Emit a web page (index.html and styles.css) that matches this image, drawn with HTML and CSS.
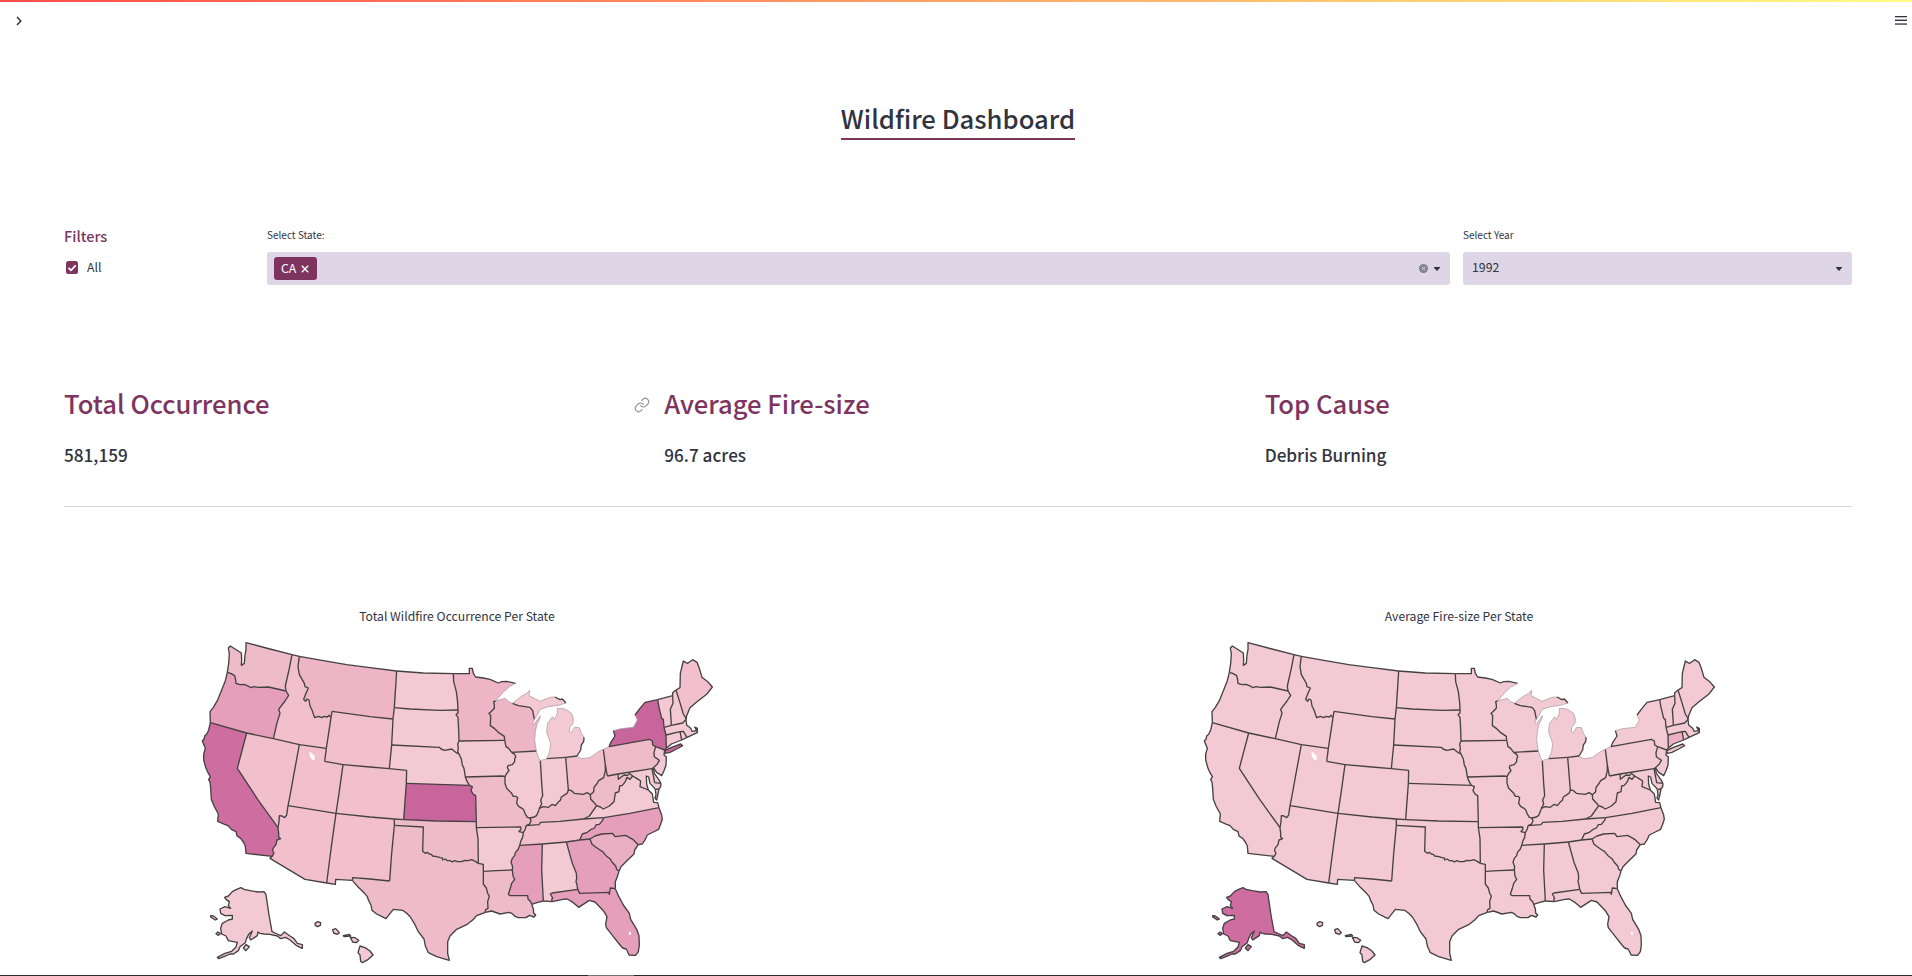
FILE: index.html
```html
<!DOCTYPE html>
<html lang="en">
<head>
<meta charset="utf-8">
<title>Wildfire Dashboard</title>
<link rel="stylesheet" href="styles.css">
</head>
<body>
<div class="app">
  <div class="decoration"></div>
  <header class="toolbar">
    <svg class="chevron" viewBox="0 0 6 10"><path d="M1 1l3.8 4L1 9"/></svg>
    <svg class="menu" viewBox="0 0 12 9"><rect width="12" height="1.3"/><rect y="3.6" width="12" height="1.4"/><rect y="7.4" width="12" height="1.3"/></svg>
  </header>

  <main class="content">
    <div class="title-row"><h1 class="title">Wildfire Dashboard</h1></div>

    <section class="filters">
      <div class="filter-all">
        <h3 class="filters-title">Filters</h3>
        <label class="check">
          <svg class="box" viewBox="0 0 12 13"><rect width="12" height="13" rx="2.5"/><path d="M2.5 6.8l2.5 2.5 4.7-5"/></svg>
          <span>All</span>
        </label>
      </div>
      <div class="field">
        <div class="label">Select State:</div>
        <div class="select multi">
          <span class="chip"><span>CA</span><svg class="chip-x" viewBox="0 0 8 8"><path d="M.8.8l6.4 6.4M7.2.8L.8 7.2"/></svg></span>
          <span class="controls">
            <svg class="clear" viewBox="0 0 9 9"><circle cx="4.5" cy="4.5" r="4.5"/><path d="M3 3l3 3M6 3L3 6"/></svg>
            <svg class="caret" viewBox="0 0 6 4"><path d="M0 0h6v.8L3 4 0 .8z"/></svg>
          </span>
        </div>
      </div>
      <div class="field">
        <div class="label">Select Year</div>
        <div class="select single">
          <span class="value">1992</span>
          <svg class="caret" viewBox="0 0 6 4"><path d="M0 0h6v.8L3 4 0 .8z"/></svg>
        </div>
      </div>
    </section>

    <section class="metrics">
      <div class="metric"><h2>Total Occurrence</h2><p>581,159</p></div>
      <div class="metric">
        <svg class="anchor" viewBox="0 0 24 24"><path d="M10 13a5 5 0 0 0 7.54.54l3-3a5 5 0 0 0-7.07-7.07l-1.72 1.71"/><path d="M14 11a5 5 0 0 0-7.54-.54l-3 3a5 5 0 0 0 7.07 7.07l1.71-1.71"/></svg>
        <h2>Average Fire-size</h2><p>96.7 acres</p>
      </div>
      <div class="metric"><h2>Top Cause</h2><p>Debris Burning</p></div>
    </section>

    <section class="charts">
      <figure class="chart"><figcaption>Total Wildfire Occurrence Per State</figcaption><svg class="map" id="occurrence" viewBox="0 0 1620 1038"></svg></figure>
      <figure class="chart"><figcaption>Average Fire-size Per State</figcaption><svg class="map" id="firesize" viewBox="0 0 1620 1038"></svg></figure>
    </section>
  </main>
  <footer class="edge"><span class="edge-light"></span></footer>
</div>
<script src="maps.js"></script>
</body>
</html>
```
FILE: styles.css
```css
* { box-sizing: border-box; }
body {
  margin: 0;
  background: #fff;
  color: #31333f;
  font-family: "Noto Sans CJK SC", "Noto Sans CJK JP", sans-serif;
}
h1, h2, h3, p, figure { margin: 0; }
svg { display: block; flex: none; }

.app { height: 976px; overflow: hidden; display: flex; flex-direction: column; }
.decoration { height: 2px; flex: none; background: linear-gradient(90deg, #ff4b4b, #fffd80); }
.toolbar { height: 38px; flex: none; padding: 14px 5px 0 16px; display: flex; justify-content: space-between; }
.chevron { width: 6px; height: 10px; fill: none; stroke: #31333f; stroke-width: 1.5; }
.menu { width: 12px; height: 9px; fill: #31333f; }
.content { flex: 1; min-height: 0; padding: 0 60px 0 64px; }

.title-row { display: flex; justify-content: center; padding-top: 56px; height: 186px; }
.title {
  height: 44px;
  border-bottom: 2px solid #7d3560;
  font-size: 25.65px;
  line-height: 43px;
  font-weight: 500;
  white-space: nowrap;
}

.filters { display: grid; grid-template-columns: 190px 1183px 389px; gap: 13px; height: 151px; }
.filters-title { color: #7d3560; font-size: 14.5px; line-height: 20px; font-weight: 500; }
.check { display: flex; align-items: center; gap: 9px; padding: 12px 0 0 2px; font-size: 12.3px; line-height: 20px; }
.check span { margin-top: -1px; }
.box { width: 12px; height: 13px; fill: #7d3560; }
.box path { fill: none; stroke: #fff; stroke-width: 1.8; }
.label { height: 26px; font-size: 10px; line-height: 18px; white-space: nowrap; }
.select {
  height: 33px;
  display: flex;
  align-items: center;
  justify-content: space-between;
  border-radius: 3px;
  background: #ded5e6;
  font-size: 12.3px;
  line-height: 20px;
}
.multi { padding: 0 10px 0 7px; }
.single { padding: 0 10px 0 9px; }
.value { margin-top: -3px; }
.chip {
  display: flex;
  align-items: center;
  gap: 5px;
  width: 43px;
  height: 23px;
  padding-left: 7px;
  border-radius: 3px;
  background: #7d3560;
  color: #fff;
}
.chip span { margin-top: -1px; }
.chip-x { width: 8px; height: 8px; stroke: #fff; stroke-width: 1.4; }
.controls { display: flex; align-items: center; gap: 6px; }
.clear { width: 9px; height: 9px; fill: #838495; }
.clear path { stroke: #ded5e6; stroke-width: 1; }
.caret { width: 6px; height: 4px; fill: #31333f; }

.metrics { display: grid; grid-template-columns: repeat(3, 1fr); gap: 13px; height: 130px; border-bottom: 1px solid #d5d6d9; }
.metric { position: relative; padding-top: 6px; }
.metric h2 { color: #7d3560; font-size: 25.6px; line-height: 40px; font-weight: 500; white-space: nowrap; }
.metric p { padding-top: 19px; font-size: 17.15px; line-height: 26px; font-weight: 500; white-space: nowrap; }
.anchor { position: absolute; left: -30px; top: 20px; width: 16px; height: 16px; fill: none; stroke: #8d8e96; stroke-width: 1.7; stroke-linecap: round; stroke-linejoin: round; }

.charts { display: grid; grid-template-columns: 1002px 1fr; padding-top: 99px; }
.chart { width: 786px; }
.chart figcaption { height: 24px; font-size: 12.2px; line-height: 20px; text-align: center; }
.map { width: 540px; height: 346px; margin-left: 126px; overflow: visible; }
.border { fill: none; stroke: #454044; stroke-width: 4; stroke-linejoin: round; }
.shore { fill: none; stroke: #a99aa0; stroke-width: 2.2; stroke-linejoin: round; }
.lake { fill: #fff; }

.edge { height: 1px; flex: none; background: #2b2b2e; padding-left: 588px; }
.edge-light { display: block; width: 46px; height: 1px; background: #737373; }
```
FILE: maps.js
```js
// Shared boundary lines; a state outline is a chain of these ("-" walks one backwards).
const arcs = {
  waCoast: "112,127 116,100 118,72 115,54 121,48 140,60 154,69 155,90 154,106 163,100 165,75 168,58 168,38 240,57 306,74",
  waOr: "112,127 122,130 134,137 137,150 138,160 150,164 163,163 178,170 182,173 192,170 205,172 235,171 262,177 288,183",
  waId: "306,74 298,115 286,168 288,183",
  orCoast: "112,127 106,152 95,180 82,212 70,232 60,245 61,278",
  orCa: "61,278 170,309", orNv: "170,309 250,326",
  orId: "288,183 296,196 285,213 266,238 270,250 262,275 250,326",
  nvId: "250,326 328,344", idUt: "328,344 409,355", idN: "306,74 328,79",
  idMt: "328,79 324,110 328,134 343,160 345,170 355,174 348,190 341,208 347,214 351,207 357,210 360,228 366,240 370,252 374,263 385,259 395,263 402,259 412,261 417,256 423,263",
  mtWyW: "423,263 426,244", idWy: "423,263 409,355",
  mtN: "328,79 400,92 470,104 540,113 620,123",
  mtNd: "620,123 613,233", mtSd: "613,233 609,267", mtWyS: "426,244 540,260 609,267",
  wySd: "609,267 605,345", wyNe: "605,345 598,416", wyCo: "598,416 540,411 459,404",
  wyUtS: "459,404 404,394", wyUtW: "404,394 409,355",
  nvCa: "170,309 142,415 203,508 264,593",
  nvAz: "264,593 267,575 268,557 276,558 284,563 290,555 294,527",
  nvUt: "328,344 311,436 298,508 294,527", utAz: "294,527 438,550", utCo: "459,404 447,490 438,550",
  coNeN: "598,416 650,421", coNeE: "650,421 649,460", coKs: "649,460 641,569",
  coNm: "438,550 540,561 613,567", coOk: "613,567 641,569",
  caCoast: "61,278 56,300 50,313 44,318 42,328 37,333 46,355 41,372 41,390 48,415 54,428 61,440 56,449 60,456 62,475 64,508 72,528 85,552 83,574 90,577 104,583 114,587 124,598 138,605 141,618 152,625 160,636 166,648 168,670 247,679",
  caAz: "264,593 266,610 266,621 272,626 261,630 258,644 249,655 248,663 252,669 247,679",
  azS: "247,679 240,685 345,748 410,759", azNm: "438,550 424,650 410,759",
  nmS: "410,759 436,763 437,748 487,751", nmTxS: "487,751 488,743 540,747 599,753",
  nmTxE: "599,753 605,670 613,586", nmOk: "613,586 613,567",
  txOk: "613,586 700,591 698,664 706,670 712,667 718,672 724,673 728,678 740,680 750,683 757,684 758,690 766,687 772,692 780,692 787,696 794,692 802,695 815,695 824,691 835,692 845,689 856,694 865,700",
  txAr: "865,700 880,703 880,724", txLa: "880,724 880,762 889,774 893,790 898,798 893,815 894,835 886,840 886,847",
  txCoast: "487,751 505,772 522,788 532,800 536,812 543,825 546,841 560,852 588,866 610,838 638,841 650,850 661,861 675,884 685,905 702,927 706,948 715,968 740,980 778,991 773,970 773,935 780,918 800,898 830,884 848,870 860,857 886,847",
  okKs: "641,569 740,573 859,575", okMo: "859,575 859,593", okAr: "859,593 864,625 865,700",
  ndN: "620,123 700,129 790,131", ndMn: "790,131 791,155 799,185 803,218 804,240",
  ndSd: "613,233 660,237 750,241 804,240", sdMn: "804,240 804,248 798,254 804,262 806,300 807,333",
  sdIa: "807,333 803,342 805,355 803,365 807,372",
  neSd: "605,345 748,352 753,357 764,361 785,357 797,367 807,372",
  neIa: "807,372 814,387 817,405 822,415 826,441", neMo: "826,441 830,452 838,466",
  neKs: "649,460 838,466", ksMo: "838,466 847,470 843,482 850,493 857,497 859,575",
  mnN: "790,131 838,131 838,115 847,115 850,130 857,141 880,144 900,148 925,159 935,155 950,154 977,160",
  mnLake: "977,160 958,170 938,188 917,213",
  mnWi: "917,213 911,215 913,225 913,235 902,246 897,250 902,257 901,287 914,296 925,307 943,319 944,331",
  mnIa: "807,333 944,331", iaWi: "944,331 948,350 956,355 965,367", wiIl: "965,367 1039,363",
  iaIl: "965,367 974,373 977,380 974,388 974,395 967,404 954,407 952,413 957,422 949,432 945,440",
  iaMo: "826,441 937,438 945,440",
  moIl: "945,440 945,460 950,475 965,490 970,499 978,499 983,503 980,520 986,529 996,535 1001,539 1005,550 1012,562 1020,564",
  moKy: "1020,564 1023,573 1018,583 1008,587", moTn: "1008,587 1006,597 1000,608",
  moAr: "859,593 992,591 993,597 987,605 1000,608",
  arTn: "1000,608 998,622 993,632 989,646",
  arMs: "989,646 985,657 976,668 974,677 967,685 963,697 968,710 967,720",
  arLa: "880,724 920,722 967,720",
  msLa: "967,720 969,738 974,748 965,760 961,775 955,793 960,797 1013,797 1014,807 1022,815 1025,823",
  laCoast: "886,847 905,843 930,852 958,847 965,850 975,859 985,863 1008,863 1018,856 1032,861 1037,855 1031,849 1030,836 1025,823",
  msCoast: "1025,823 1043,817 1060,813", msAl: "1057,642 1055,720 1060,813",
  msTn: "989,646 1057,642", alTn: "1057,642 1129,636", gaTn: "1129,636 1169,630",
  alGa: "1129,636 1147,700 1159,730 1160,745 1158,755 1161,765 1163,778",
  alFl: "1163,778 1086,789 1081,792 1088,804 1085,808 1087,815", alCoast: "1060,813 1087,815",
  gaFl: "1163,778 1169,790 1257,787 1258,793 1261,774 1276,776",
  flCoast: "1276,776 1285,797 1300,825 1318,850 1322,868 1340,898 1347,917 1348,945 1345,965 1337,976 1317,975 1312,963 1308,957 1298,954 1290,945 1270,920 1249,893 1247,883 1251,860 1240,842 1215,816 1198,811 1166,832 1150,818 1132,807 1118,808 1087,815",
  gaCoast: "1276,776 1276,755 1283,737 1287,724",
  gaSc: "1200,627 1206,643 1217,651 1230,660 1238,665 1248,677 1260,686 1266,696 1277,708 1280,718 1287,724",
  gaNc: "1169,630 1200,627", tnNc: "1169,630 1177,612 1192,607 1202,599 1213,594 1219,584 1228,583 1237,572 1241,563",
  scNc: "1200,627 1215,618 1235,612 1268,610 1275,620 1307,616 1328,628 1345,644",
  scCoast: "1287,724 1293,710 1313,690 1332,672 1334,660 1345,644",
  ncCoast: "1345,644 1357,642 1366,628 1372,615 1390,606 1406,598 1411,585 1417,568 1415,555 1407,533",
  vaNc: "1241,563 1320,550 1407,533", kyTn: "1008,587 1047,584 1052,577 1110,574 1180,567", tnVa: "1180,567 1241,563",
  kyVa: "1180,567 1198,558 1220,527",
  kyWv: "1201,494 1202,507 1213,519 1220,527",
  kyOh: "1135,480 1143,481 1153,490 1180,493 1191,488 1201,494",
  kyIn: "1048,535 1060,530 1075,532 1087,523 1096,527 1104,517 1111,511 1114,501 1125,494 1132,489 1135,480",
  kyIl: "1020,564 1033,561 1040,556 1046,542 1048,535",
  ilIn: "1051,392 1055,460 1058,497 1052,510 1055,522 1048,535",
  inMi: "1070,386 1127,382", inOh: "1127,382 1135,480", ohMi: "1127,382 1161,378",
  inLake: "1051,392 1070,386", ilLake: "1039,363 1045,382 1051,392",
  wiMi: "967,220 985,227 1020,232 1028,242 1032,262 1033,268",
  wiN: "917,213 945,205 956,215 967,220",
  wiE: "1033,268 1028,280 1033,283 1042,269 1051,257 1049,268 1041,282 1036,305 1034,330 1039,363",
  upN: "967,220 992,200 1010,190 1019,181 1017,197 1050,214 1080,202 1095,201",
  upE: "1095,201 1110,209 1117,207 1128,219",
  upS: "1128,219 1105,226 1075,230 1050,238 1042,255 1033,268",
  lpW: "1070,386 1079,365 1082,340 1071,310 1070,300 1073,280 1088,260 1093,269 1102,250 1102,235 1125,237 1145,250 1150,267 1149,280 1139,292 1138,304 1144,308 1154,292 1168,293 1174,310 1182,322",
  lpE: "1182,322 1181,335 1174,345 1172,360 1161,378",
  ohLake: "1161,378 1175,386 1200,383 1225,365 1240,358",
  ohPa: "1240,358 1246,405", paWvW: "1246,405 1252,438",
  ohWv: "1246,405 1246,422 1241,443 1226,452 1220,462 1212,472 1211,485 1201,494",
  paLake: "1240,358 1257,350", paNy: "1257,350 1378,328 1387,333 1388,345 1397,350",
  paNj: "1397,350 1392,368 1393,380 1408,391 1402,402 1390,413",
  paWvS: "1252,438 1284,432", paMd: "1284,432 1386,416", paDe: "1386,416 1390,413",
  mdWv: "1284,432 1285,448 1294,441 1302,435 1313,436 1318,430 1328,438",
  wvVa: "1328,438 1320,448 1311,442 1306,455 1297,466 1289,468 1287,485 1276,489 1272,515 1258,528 1240,537 1231,531 1220,527",
  mdVa: "1328,438 1340,445 1352,453 1350,470 1375,480",
  mdBay: "1375,480 1370,462 1369,438 1376,441 1380,460 1392,473 1396,478",
  mdS: "1396,478 1407,477", mdE: "1407,477 1412,470 1413,460", deMd: "1386,416 1394,458 1413,460",
  deCoast: "1390,413 1393,430 1406,448 1413,460",
  vaEast: "1396,478 1398,495 1395,504 1400,510 1404,492 1407,477",
  vaCoast: "1375,480 1387,492 1391,517 1403,518 1407,533",
  nyNj: "1397,350 1424,360",
  njCoast: "1424,360 1422,375 1429,381 1428,405 1422,422 1415,437 1400,427 1390,413",
  nyErie: "1257,350 1262,338 1275,318 1270,302",
  nyOntario: "1270,302 1292,296 1330,292 1342,270 1335,255",
  nyN: "1335,255 1350,235 1365,217 1403,209",
  nyVt: "1403,209 1407,232 1415,265 1420,268 1422,292", nyMa: "1422,292 1428,315",
  nyCt: "1428,315 1429,355", nyc: "1429,355 1424,360", vtN: "1403,209 1448,197",
  vtNh: "1448,197 1449,220 1441,238 1443,265 1444,286", vtMa: "1422,292 1444,286",
  nhMa: "1444,286 1478,279 1488,268", nhMe: "1458,180 1469,215 1480,252 1488,265 1488,268",
  nhN: "1448,197 1448,188 1458,180",
  meCoast: "1458,180 1470,173 1471,130 1480,93 1488,98 1493,100 1508,89 1521,97 1529,118 1536,142 1555,157 1567,171 1550,193 1520,216 1500,233 1490,257 1488,268",
  maCoast: "1488,268 1490,285 1502,295 1506,304 1520,302 1514,291 1522,295 1522,308 1491,322",
  ctMa: "1428,315 1470,305", maRi: "1470,305 1480,304 1491,322", ctRi: "1470,305 1475,330",
  riCoast: "1475,330 1491,322", ctCoast: "1475,330 1444,342 1429,355"
};
const shores = new Set(["mnLake", "inLake", "ilLake", "wiN", "wiE", "upN", "upS", "lpW", "ohLake", "paLake", "nyOntario"]);

const states = {
  WA: "waCoast waId -waOr", OR: "orCoast orCa orNv -orId -waOr", ID: "idN idMt idWy -idUt -nvId -orId -waId",
  MT: "mtN mtNd mtSd -mtWyS -mtWyW -idMt", CA: "caCoast -caAz -nvCa -orCa", NV: "orNv nvId nvUt -nvAz -nvCa",
  UT: "idUt -wyUtW -wyUtS utCo -utAz -nvUt", WY: "mtWyS wySd wyNe wyCo wyUtS wyUtW -idWy mtWyW",
  CO: "-wyCo coNeN coNeE coKs -coOk -coNm -utCo", AZ: "utAz azNm -azS -caAz nvAz", NM: "coNm -nmOk -nmTxE -nmTxS -nmS -azNm",
  ND: "ndN ndMn -ndSd -mtNd", SD: "ndSd sdMn sdIa -neSd -wySd -mtSd", NE: "neSd neIa neMo -neKs -coNeE -coNeN -wyNe",
  KS: "neKs ksMo -okKs -coKs", OK: "coOk okKs okMo okAr -txOk nmOk", TX: "txOk txAr txLa -txCoast nmTxS nmTxE",
  MN: "mnN mnLake mnWi -mnIa -sdMn -ndMn", IA: "mnIa iaWi iaIl -iaMo -neIa -sdIa", MO: "iaMo moIl moKy moTn -moAr -okMo -ksMo -neMo",
  AR: "moAr arTn arMs -arLa -txAr -okAr", LA: "arLa msLa -laCoast -txLa", WI: "wiN wiMi wiE -wiIl -iaWi -mnWi",
  IL: "wiIl ilLake ilIn -kyIl -moIl -iaIl", IN: "inLake inMi inOh -kyIn -ilIn", MI: "inMi ohMi -lpE -lpW",
  UP: "upN upE upS -wiMi", OH: "ohMi ohLake ohPa ohWv -kyOh -inOh", KY: "kyIl kyIn kyOh kyWv -kyVa -kyTn -moKy",
  TN: "kyTn tnVa -tnNc -gaTn -alTn -msTn -arTn -moTn", MS: "msTn msAl -msCoast -msLa -arMs", AL: "alTn alGa alFl -alCoast -msAl",
  GA: "gaTn gaNc gaSc -gaCoast -gaFl -alGa", FL: "gaFl flCoast -alFl", SC: "scNc -scCoast -gaSc",
  NC: "tnNc vaNc -ncCoast -scNc -gaNc", VA: "mdVa vaCoast -vaNc -tnVa kyVa -wvVa", WV: "ohWv kyWv -wvVa -mdWv -paWvS -paWvW",
  PA: "paLake paNy paNj -paDe -paMd -paWvS -paWvW -ohPa", MD: "paMd deMd -mdE -mdS -mdBay -mdVa -mdWv", DE: "paDe deCoast -deMd",
  VE: "vaEast", NJ: "nyNj njCoast -paNj", NY: "nyErie nyOntario nyN nyVt nyMa nyCt nyc -nyNj -paNy", VT: "vtN vtNh -vtMa -nyVt",
  NH: "nhN nhMe -nhMa -vtNh", ME: "meCoast -nhMe", MA: "vtMa nhMa maCoast -maRi -ctMa -nyMa", CT: "ctMa ctRi ctCoast -nyCt", RI: "maRi -riCoast -ctRi"
};

const islands = [
  ["NY", "1426,370 1424,362 1445,352 1472,342 1478,347 1460,357 1440,367"],
  ["AK", "153,773 162,778 180,782 205,786 222,785 228,794 237,855 246,905 262,912 271,917 276,914 283,906 300,918 312,926 322,940 337,944 337,955 330,952 320,947 300,930 287,922 272,926 262,918 240,913 222,912 210,910 204,906 202,917 194,922 182,930 178,923 187,903 176,913 170,925 166,938 150,950 145,962 130,972 120,972 104,979 86,986 82,982 105,970 125,964 138,951 142,937 115,932 108,918 95,912 92,895 97,880 115,870 127,867 127,856 105,857 92,850 90,837 105,830 122,835 115,827 118,815 108,808 104,802 115,798 127,785 140,778"],
  ["AK", "62,857 70,858 82,867 76,870 62,861"], ["AK", "78,911 84,906 91,911 85,916"], ["AK", "160,954 168,944 178,950 168,962"],
  ["HI", "375,880 383,875 392,878 391,886 383,890 376,886"], ["HI", "428,899 437,896 448,908 442,913 431,909"],
  ["HI", "460,917 478,913 482,918 462,920"], ["HI", "481,922 495,923 506,931 499,938 488,936"],
  ["HI", "510,948 525,953 540,963 549,975 535,988 517,998 512,994 510,975 504,968"]
];
const lakes = ["358,364 368,372 374,378 374,390 368,391 360,380", "1316,906 1323,906 1323,914 1317,914"];

const lowest = "#f3cad3";
const tones = [
  ["#f1c0cc", "ID NV UT AZ NM CO WY ME TN OH"], ["#eebbc9", "WA PA WV KY TX MO OK LA"],
  ["#edb5c6", "WI MN MT"], ["#ebafc3", "SC"], ["#e69fba", "OR NC GA FL MS"], ["#ce6da0", "CA"], ["#c8669c", "NY KS"]
];
const occurrence = {};
tones.forEach(([color, list]) => list.split(" ").forEach(s => { occurrence[s] = color; }));
const firesize = { AK: "#ce6da0", CT: "#edb0c3", NY: lowest };

function ring(refs) {
  return refs.split(" ")
    .map(r => r[0] === "-" ? arcs[r.slice(1)].split(" ").reverse().join(" ") : arcs[r])
    .join(" ");
}

function draw(id, fills) {
  let out = "";
  for (const s in states) out += `<polygon points="${ring(states[s])}" fill="${fills[s] || lowest}"/>`;
  for (const a in arcs) out += `<polyline class="${shores.has(a) ? "shore" : "border"}" points="${arcs[a]}"/>`;
  for (const [s, p] of islands) out += `<polygon class="border" points="${p}" style="fill:${fills[s] || lowest}"/>`;
  for (const p of lakes) out += `<polygon class="lake" points="${p}"/>`;
  document.getElementById(id).innerHTML = out;
}
draw("occurrence", occurrence);
draw("firesize", firesize);
```
